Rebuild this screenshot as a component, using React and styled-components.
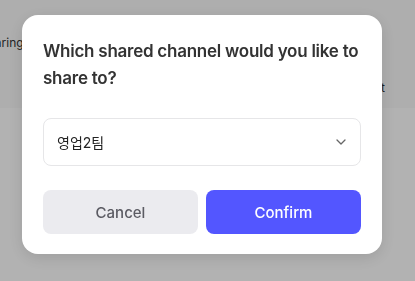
import React, { useState } from 'react';
import styled, { createGlobalStyle } from 'styled-components';

const GlobalStyle = createGlobalStyle`
  html, body {
    margin: 0;
    padding: 0;
    width: 415px;
    height: 281px;
    overflow: hidden;
    font-family: Inter, "Noto Sans CJK KR", sans-serif;
  }
`;

const Page = styled.div`
  width: 415px;
  height: 281px;
  background: #ffffff;
  color: #333;
  font-size: 12px;
`;

const TopBand = styled.div`
  height: 108px;
  background: #fafafa;
  display: flex;
  flex-direction: column;
`;

const PageRow = styled.div`
  display: flex;
  justify-content: ${(p) => (p.end ? 'flex-end' : 'flex-start')};
  padding: ${(p) => p.pad};
  white-space: nowrap;
`;

const Clipped = styled.span`
  margin-left: -20px;
`;

const Backdrop = styled.div`
  position: fixed;
  inset: 0;
  background: rgba(0, 0, 0, 0.3);
`;

const Modal = styled.div`
  position: fixed;
  top: 15px;
  left: 22px;
  width: 360px;
  box-sizing: border-box;
  padding: 23px 21px 20px;
  background: #fff;
  border-radius: 16px;
  box-shadow: 0 4px 16px rgba(0, 0, 0, 0.12);
  display: flex;
  flex-direction: column;
`;

const Title = styled.h2`
  margin: 0 0 26px;
  font-size: 17px;
  line-height: 27px;
  font-weight: 600;
  color: #333;
  letter-spacing: -0.25px;
`;

const Select = styled.button`
  display: flex;
  align-items: center;
  justify-content: space-between;
  height: 48px;
  padding: 0 14px 0 13px;
  background: #fff;
  border: 1px solid #e6e6e8;
  border-radius: 8px;
  font-family: inherit;
  font-size: 14px;
  color: #222;
  cursor: pointer;
`;

const Actions = styled.div`
  display: grid;
  grid-template-columns: 1fr 1fr;
  gap: 8px;
  margin-top: 24px;
`;

const Button = styled.button`
  height: 44px;
  border: none;
  border-radius: 8px;
  font-family: inherit;
  font-size: 15px;
  font-weight: 500;
  background: ${(p) => (p.primary ? '#5356ff' : '#ebebef')};
  color: ${(p) => (p.primary ? '#fff' : '#5b5b63')};
  cursor: pointer;
`;

const Chevron = () => (
  <svg width="10" height="6" viewBox="0 0 10 6" fill="none">
    <path d="M1 1l4 4 4-4" stroke="#666" strokeWidth="1.3" strokeLinecap="round" strokeLinejoin="round" />
  </svg>
);

export default function App() {
  const [channel] = useState('영업2팀');

  return (
    <>
      <GlobalStyle />
      <Page>
        <TopBand>
          <PageRow pad="35px 0 0 0">
            <Clipped>Sharing</Clipped>
          </PageRow>
          <PageRow end pad="30px 30px 0 0">
            <span>Edit</span>
          </PageRow>
        </TopBand>
      </Page>
      <Backdrop />
      <Modal>
        <Title>Which shared channel would you like to share to?</Title>
        <Select>
          <span>{channel}</span>
          <Chevron />
        </Select>
        <Actions>
          <Button>Cancel</Button>
          <Button primary>Confirm</Button>
        </Actions>
      </Modal>
    </>
  );
}
